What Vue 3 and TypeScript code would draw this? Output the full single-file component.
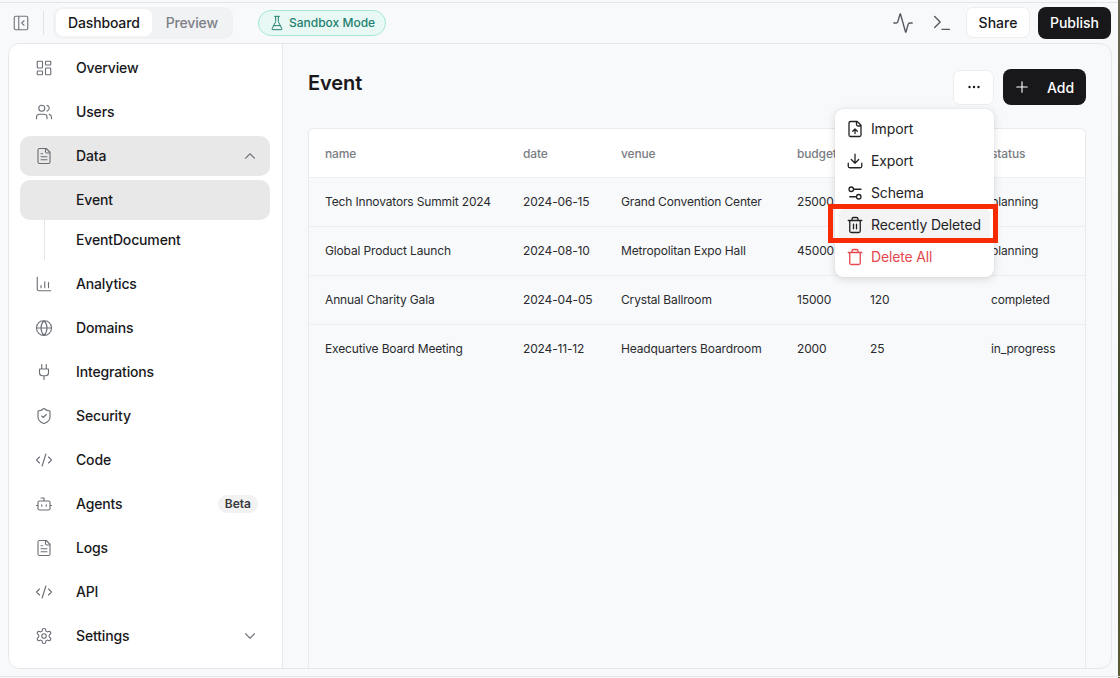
<script setup lang="ts">
const ring = (cx: number, cy: number, r: number) => `M${cx - r} ${cy}a${r} ${r} 0 1 0 ${r * 2} 0a${r} ${r} 0 1 0 ${-r * 2} 0`
const box = (x: number, y: number, w: number, h: number, r = 2) =>
  `M${x + r} ${y}h${w - 2 * r}a${r} ${r} 0 0 1 ${r} ${r}v${h - 2 * r}a${r} ${r} 0 0 1 ${-r} ${r}h${-(w - 2 * r)}a${r} ${r} 0 0 1 ${-r} ${-r}v${-(h - 2 * r)}a${r} ${r} 0 0 1 ${r} ${-r}z`
const fileBase = 'M15 2H6a2 2 0 0 0-2 2v16a2 2 0 0 0 2 2h12a2 2 0 0 0 2-2V7Z M14 2v4a2 2 0 0 0 2 2h4'
const fileText = fileBase + ' M10 9H8 M16 13H8 M16 17H8'
const code = 'M18 16l4-4-4-4 M6 8l-4 4 4 4 M14.5 4l-5 16'

const icons = {
  dashboard: box(3, 3, 7, 9, 1) + box(14, 3, 7, 5, 1) + box(14, 12, 7, 9, 1) + box(3, 16, 7, 5, 1),
  users: 'M16 21v-2a4 4 0 0 0-4-4H6a4 4 0 0 0-4 4v2 M16 3.128a4 4 0 0 1 0 7.744 M22 21v-2a4 4 0 0 0-3-3.87 ' + ring(9, 7, 4),
  file: fileText,
  chart: 'M3 3v16a2 2 0 0 0 2 2h16 M8 17v-3 M13 17V9 M18 17v-7',
  globe: ring(12, 12, 10) + ' M12 2a14.5 14.5 0 0 0 0 20 14.5 14.5 0 0 0 0-20 M2 12h20',
  plug: 'M12 22v-5 M9 8V2 M15 8V2 M18 8v5a4 4 0 0 1-4 4h-4a4 4 0 0 1-4-4V8Z',
  shield: 'M20 13c0 5-3.5 7.5-7.66 8.95a1 1 0 0 1-.67-.01C7.5 20.5 4 18 4 13V6a1 1 0 0 1 1-1c2 0 4.5-1.2 6.24-2.72a1.17 1.17 0 0 1 1.52 0C14.51 3.81 17 5 19 5a1 1 0 0 1 1 1z M9 12l2 2 4-4',
  code,
  bot: 'M12 8V4H8 ' + box(4, 8, 16, 12, 2) + ' M2 14h2 M20 14h2 M15 13v2 M9 13v2',
  gear: 'M12.22 2h-.44a2 2 0 0 0-2 2v.18a2 2 0 0 1-1 1.73l-.43.25a2 2 0 0 1-2 0l-.15-.08a2 2 0 0 0-2.73.73l-.22.38a2 2 0 0 0 .73 2.73l.15.1a2 2 0 0 1 1 1.72v.51a2 2 0 0 1-1 1.74l-.15.09a2 2 0 0 0-.73 2.73l.22.38a2 2 0 0 0 2.73.73l.15-.08a2 2 0 0 1 2 0l.43.25a2 2 0 0 1 1 1.73V20a2 2 0 0 0 2 2h.44a2 2 0 0 0 2-2v-.18a2 2 0 0 1 1-1.73l.43-.25a2 2 0 0 1 2 0l.15.08a2 2 0 0 0 2.73-.73l.22-.39a2 2 0 0 0-.73-2.73l-.15-.08a2 2 0 0 1-1-1.74v-.5a2 2 0 0 1 1-1.74l.15-.09a2 2 0 0 0 .73-2.73l-.22-.38a2 2 0 0 0-2.73-.73l-.15.08a2 2 0 0 1-2 0l-.43-.25a2 2 0 0 1-1-1.73V4a2 2 0 0 0-2-2z ' + ring(12, 12, 3),
  up: 'M18 15l-6-6-6 6',
  down: 'M6 9l6 6 6-6',
  panel: box(3, 3, 18, 18, 2) + ' M9 3v18 M16 15l-3-3 3-3',
  flask: 'M10 2v7.527a2 2 0 0 1-.211.896L4.72 20.55a1 1 0 0 0 .9 1.45h12.76a1 1 0 0 0 .9-1.45l-5.069-10.127A2 2 0 0 1 14 9.527V2 M8.5 2h7 M7 16h10',
  activity: 'M22 12h-2.48a2 2 0 0 0-1.93 1.46l-2.35 8.36a.25.25 0 0 1-.48 0L9.24 2.18a.25.25 0 0 0-.48 0l-2.35 8.36A2 2 0 0 1 4.49 12H2',
  terminal: 'M4 17l6-6-6-6 M12 19h8',
  plus: 'M5 12h14 M12 5v14',
  import: fileBase + ' M12 18v-6 M9 15l3-3 3 3',
  export: 'M12 15V3 M21 15v4a2 2 0 0 1-2 2H5a2 2 0 0 1-2-2v-4 M7 10l5 5 5-5',
  schema: 'M20 7h-9 M14 17H5 ' + ring(17, 17, 3) + ring(7, 7, 3),
  trash2: 'M3 6h18 M19 6v14c0 1-1 2-2 2H7c-1 0-2-1-2-2V6 M8 6V4c0-1 1-2 2-2h4c1 0 2 1 2 2v2 M10 11v6 M14 11v6',
  trash: 'M3 6h18 M19 6v14c0 1-1 2-2 2H7c-1 0-2-1-2-2V6 M8 6V4c0-1 1-2 2-2h4c1 0 2 1 2 2v2',
}

interface NavItem { label: string; icon?: string; active?: boolean; chevron?: string; badge?: string; sub?: boolean; last?: boolean }
const nav: NavItem[] = [
  { label: 'Overview', icon: icons.dashboard },
  { label: 'Users', icon: icons.users },
  { label: 'Data', icon: icons.file, active: true, chevron: icons.up },
  { label: 'Event', active: true, sub: true },
  { label: 'EventDocument', sub: true, last: true },
  { label: 'Analytics', icon: icons.chart },
  { label: 'Domains', icon: icons.globe },
  { label: 'Integrations', icon: icons.plug },
  { label: 'Security', icon: icons.shield },
  { label: 'Code', icon: icons.code },
  { label: 'Agents', icon: icons.bot, badge: 'Beta' },
  { label: 'Logs', icon: icons.file },
  { label: 'API', icon: icons.code },
  { label: 'Settings', icon: icons.gear, chevron: icons.down },
]

const columns = ['name', 'date', 'venue', 'budget', 'attendees', 'status']
const rows = [
  ['Tech Innovators Summit 2024', '2024-06-15', 'Grand Convention Center', '25000', '500', 'planning'],
  ['Global Product Launch', '2024-08-10', 'Metropolitan Expo Hall', '45000', '800', 'planning'],
  ['Annual Charity Gala', '2024-04-05', 'Crystal Ballroom', '15000', '120', 'completed'],
  ['Executive Board Meeting', '2024-11-12', 'Headquarters Boardroom', '2000', '25', 'in_progress'],
]

const menu = [
  { label: 'Import', icon: icons.import },
  { label: 'Export', icon: icons.export },
  { label: 'Schema', icon: icons.schema },
  { label: 'Recently Deleted', icon: icons.trash2, hot: true },
  { label: 'Delete All', icon: icons.trash, danger: true },
]
</script>

<template>
  <div class="window">
    <header class="topbar">
      <svg class="ic toggle" viewBox="0 0 24 24"><path :d="icons.panel" /></svg>
      <span class="divider"></span>
      <div class="tabs">
        <span class="tab on">Dashboard</span>
        <span class="tab">Preview</span>
      </div>
      <span class="sandbox">
        <svg class="ic flask" viewBox="0 0 24 24"><path :d="icons.flask" /></svg>
        Sandbox Mode
      </span>
      <div class="top-right">
        <svg class="ic tool activity" viewBox="0 0 24 24"><path :d="icons.activity" /></svg>
        <svg class="ic tool terminal" viewBox="0 0 24 24"><path :d="icons.terminal" /></svg>
        <button class="btn share">Share</button>
        <button class="btn publish">Publish</button>
      </div>
    </header>

    <div class="panel">
      <aside class="sidebar">
        <div
          v-for="item in nav"
          :key="item.label"
          class="nav-item"
          :class="{ active: item.active, sub: item.sub, last: item.last }"
        >
          <span class="nav-icon">
            <svg v-if="item.icon" class="ic" viewBox="0 0 24 24"><path :d="item.icon" /></svg>
          </span>
          <span class="nav-label">{{ item.label }}</span>
          <span v-if="item.badge" class="badge">{{ item.badge }}</span>
          <svg v-if="item.chevron" class="ic chev" viewBox="0 0 24 24"><path :d="item.chevron" /></svg>
        </div>
      </aside>

      <main class="content">
        <div class="head">
          <h1>Event</h1>
          <button class="btn more" aria-label="More">
            <svg viewBox="0 0 16 16" width="16" height="16"><circle cx="3.5" cy="8" r="1.2" /><circle cx="8" cy="8" r="1.2" /><circle cx="12.5" cy="8" r="1.2" /></svg>
          </button>
          <button class="btn add">
            <svg class="ic" viewBox="0 0 24 24"><path :d="icons.plus" /></svg>
            Add
          </button>
        </div>

        <div class="table-box">
          <table>
            <colgroup>
              <col class="c1" /><col class="c2" /><col class="c3" /><col class="c4" /><col class="c5" /><col />
            </colgroup>
            <thead>
              <tr><th v-for="c in columns" :key="c">{{ c }}</th></tr>
            </thead>
            <tbody>
              <tr v-for="r in rows" :key="r[0]">
                <td v-for="(v, i) in r" :key="i">{{ v }}</td>
              </tr>
            </tbody>
          </table>
        </div>

        <div class="menu">
          <div v-for="m in menu" :key="m.label" class="menu-item" :class="{ hot: m.hot, danger: m.danger }">
            <svg class="ic" viewBox="0 0 24 24"><path :d="m.icon" /></svg>
            <span class="menu-label">{{ m.label }}</span>
            <span v-if="m.hot" class="callout"></span>
          </div>
        </div>
      </main>
    </div>
    <span class="wallpaper"></span>
  </div>
</template>

<style>
html, body { margin: 0; background: #f8f9fb; }
</style>

<style scoped>
* { box-sizing: border-box; }
.window {
  position: relative;
  width: 1120px;
  height: 678px;
  overflow: hidden;
  padding-top: 2px;
  background: #f8f9fb;
  font-family: Inter, "Liberation Sans", sans-serif;
  letter-spacing: -0.15px;
  color: #18181b;
}
.window::before {
  content: "";
  position: absolute;
  inset: 2px 0 auto 0;
  height: 1px;
  background: #e4e5e7;
}
.window::after {
  content: "";
  position: absolute;
  inset: auto 0 1px 0;
  height: 1px;
  background: #e4e5e7;
}
.wallpaper {
  position: absolute;
  top: 0;
  right: 0;
  bottom: 0;
  width: 2px;
  background: linear-gradient(#6b6a55, #3f4a2c 60%, #5a5a33);
}
.ic {
  width: 18px;
  height: 18px;
  flex: none;
  fill: none;
  stroke: currentColor;
  stroke-width: 1.5;
  stroke-linecap: round;
  stroke-linejoin: round;
}
.topbar {
  display: flex;
  align-items: center;
  height: 41px;
  padding: 0 9px 0 12px;
}
.toggle { color: #71757c; }
.divider {
  width: 1px;
  height: 24px;
  margin: 0 9px 0 13px;
  background: #dfe1e4;
}
.tabs {
  display: flex;
  align-items: center;
  width: 180px;
  height: 32px;
  padding: 3px;
  border-radius: 9px;
  background: #f1f2f3;
  font-size: 14px;
  font-weight: 500;
}
.tab {
  height: 27px;
  line-height: 27px;
  padding: 0 14px;
  border-radius: 7px;
  color: #7d8087;
}
.tab.on {
  width: 96px;
  padding: 0 12px;
  background: #fff;
  color: #18181b;
}
.sandbox {
  display: flex;
  align-items: center;
  gap: 4px;
  height: 26px;
  margin-left: 25px;
  padding: 0 10px;
  border: 1px solid #a6e6d8;
  border-radius: 13px;
  background: #e8f9f5;
  color: #23806f;
  font-size: 12px;
  font-weight: 500;
  letter-spacing: 0;
}
.flask { width: 16px; height: 16px; }
.top-right {
  display: flex;
  align-items: center;
  margin-left: auto;
}
.tool { width: 22px; height: 22px; color: #55595f; }
.activity { margin-right: 17px; }
.terminal { margin-right: 13px; }
.btn {
  display: inline-flex;
  align-items: center;
  justify-content: center;
  border: 0;
  font-family: inherit;
  font-size: 14px;
  font-weight: 500;
  cursor: pointer;
}
.share {
  width: 64px;
  height: 31px;
  margin-right: 8px;
  border: 1px solid #eceef0;
  border-radius: 7px;
  background: #fff;
  color: #18181b;
}
.publish {
  width: 73px;
  height: 32px;
  border-radius: 8px;
  background: #18181b;
  color: #fff;
}
.panel {
  display: flex;
  height: 626px;
  margin: 0 8px;
  width: 1104px;
  border: 1px solid #e5e7ea;
  border-radius: 12px;
  overflow: hidden;
  background: #f8f9fb;
}
.sidebar {
  flex: none;
  width: 274px;
  padding: 4px 12px 0 11px;
  background: #fff;
  border-right: 1px solid #e5e7ea;
  display: flex;
  flex-direction: column;
  gap: 4px;
}
.nav-item {
  position: relative;
  display: flex;
  align-items: center;
  height: 40px;
  flex: none;
  padding: 0 11px 0 15px;
  border-radius: 10px;
  font-size: 14px;
  font-weight: 500;
}
.nav-item.active { background: #e8e8e8; }
.nav-item.sub.active { margin-bottom: -4px; }
.nav-item.last::before {
  content: "";
  position: absolute;
  left: 24px;
  top: 0;
  bottom: 0;
  width: 1px;
  background: #e4e5e7;
}
.nav-icon {
  display: flex;
  width: 18px;
  height: 18px;
  margin-right: 23px;
  color: #6b6f76;
}
.nav-label { flex: 1; padding-bottom: 2px; }
.badge {
  height: 18px;
  line-height: 18px;
  margin-right: 1px;
  padding: 0 7px;
  border-radius: 9px;
  background: #f2f2f3;
  font-size: 12px;
  font-weight: 600;
  color: #3a3a3e;
  letter-spacing: 0;
}
.chev { color: #75797f; }
.content {
  position: relative;
  flex: 1;
  min-width: 0;
  padding: 25px 25px 0 25px;
  display: flex;
  flex-direction: column;
}
.head {
  display: flex;
  align-items: center;
  height: 36px;
  margin-bottom: 23px;
}
h1 {
  flex: 1;
  margin: 0;
  padding-bottom: 8px;
  font-size: 20px;
  font-weight: 600;
  letter-spacing: -0.1px;
}
.more {
  width: 41px;
  height: 35px;
  margin-right: 9px;
  border: 1px solid #eceef0;
  border-radius: 7px;
  background: #fff;
}
.more svg { fill: #18181b; }
.add {
  justify-content: flex-start;
  gap: 16px;
  width: 83px;
  height: 36px;
  padding-left: 10px;
  border-radius: 8px;
  background: #18181b;
  color: #fff;
}
.table-box {
  flex: 1;
  border: 1px solid #e8eaed;
  border-bottom: 0;
  border-radius: 6px 6px 0 0;
  overflow: hidden;
}
table {
  width: 100%;
  table-layout: fixed;
  border-collapse: collapse;
  font-size: 12px;
}
.c1 { width: 198px; }
.c2 { width: 98px; }
.c3 { width: 176px; }
.c4 { width: 73px; }
.c5 { width: 121px; }
th, td {
  padding: 0 0 0 16px;
  text-align: left;
  white-space: nowrap;
  overflow: hidden;
}
th {
  height: 48px;
  padding-top: 2px;
  background: #fff;
  font-weight: 500;
  color: #7a7d83;
  border-bottom: 1px solid #eff0f2;
}
td {
  height: 49px;
  color: #2a2b2e;
  border-bottom: 1px solid #eceef0;
}
tbody tr:last-child td { border-bottom: 0; }
.menu {
  position: absolute;
  top: 65px;
  left: 552px;
  width: 159px;
  height: 168px;
  padding: 4px;
  background: #fff;
  border-radius: 8px;
  box-shadow: 0 2px 8px rgba(20, 20, 30, 0.14), 0 0 1px rgba(20, 20, 30, 0.18);
}
.menu-item {
  position: relative;
  display: flex;
  align-items: center;
  gap: 7px;
  height: 32px;
  padding-left: 7px;
  border-radius: 5px;
  font-size: 14px;
  color: #232326;
}
.menu-item .ic { stroke-width: 1.75; }
.menu-label { padding-bottom: 2px; }
.menu-item.hot { background: #f4f4f5; }
.menu-item.danger { color: #e5484d; }
.callout {
  position: absolute;
  left: -11px;
  right: -8px;
  top: -5px;
  bottom: -2px;
  border: 5px solid #f82c04;
  pointer-events: none;
}
</style>
